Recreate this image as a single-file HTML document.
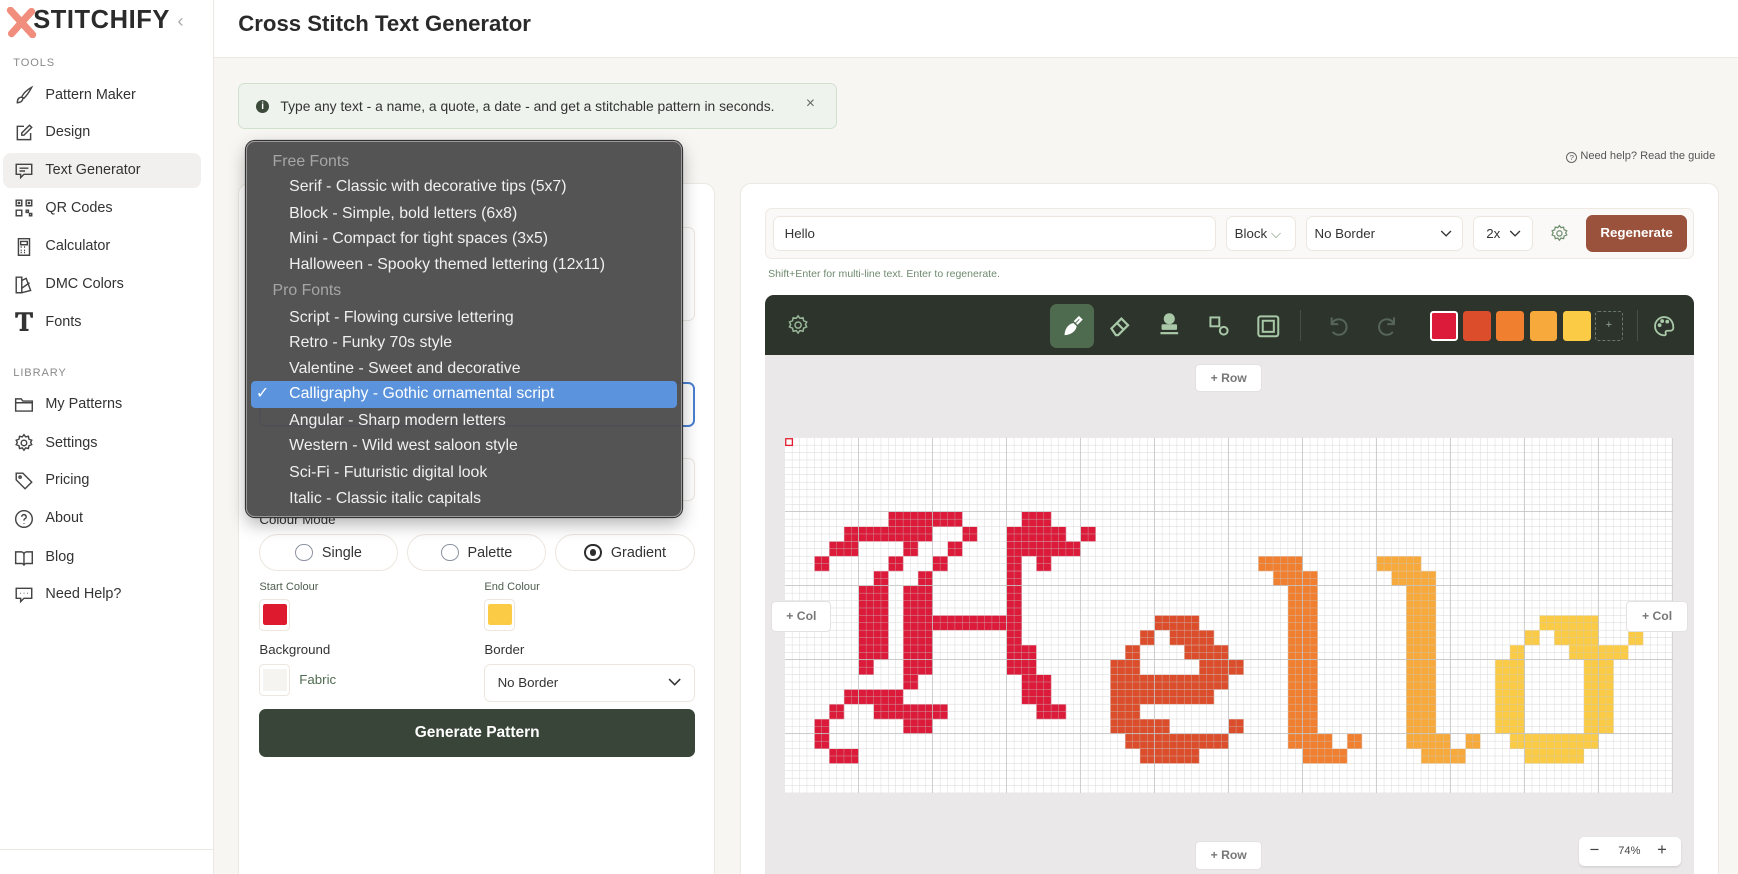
<!DOCTYPE html>
<html><head><meta charset="utf-8">
<style>
*{box-sizing:border-box;margin:0;padding:0}
html,body{width:1738px;height:874px;overflow:hidden;background:#f7f6f3}
#root{zoom:1.10842;width:1568px;height:789px;position:relative;font-family:"Liberation Sans",sans-serif;color:#2e2e2e;overflow:hidden}
.a{position:absolute}
.side{left:0;top:0;width:193px;height:789px;background:#fff;border-right:1px solid #ebe8e4}
.nav{position:absolute;left:3px;width:178px;height:32px;font-size:13px;color:#333;line-height:32px;padding-left:38px}
.nav svg{position:absolute;left:10px;top:7px}
.nav.act{background:#f1f0ee;border-radius:7px}
.sec{position:absolute;left:12px;font-size:10px;color:#8a8a8a;letter-spacing:.8px}
.card{background:#fff;border:1px solid #ece8e2;border-radius:10px}
.box{background:#fff;border:1px solid #ece6df;border-radius:6px}
.pill{position:absolute;top:482px;height:33px;border:1px solid #ece6df;border-radius:17px;background:#fff;font-size:13px;color:#333;display:flex;align-items:center;justify-content:center;gap:8px}
.rad{width:16px;height:16px;border:1.5px solid #8c93a0;border-radius:50%;display:inline-block}
.dd{left:222px;top:127px;width:393px;height:339px;background:rgba(78,78,78,.97);border:1px solid #9a9a9a;border-radius:8px;box-shadow:0 0 0 1px #333,0 6px 16px rgba(0,0,0,.3)}
.it{position:absolute;left:38px;font-size:14.3px;color:#f0f0f0;line-height:20px}
.hd{position:absolute;left:23px;font-size:14.3px;color:#a6a6a6;line-height:20px}
.sw{position:absolute;top:281px;width:25px;height:27px;border-radius:3px}
.btn{position:absolute;background:#fff;border:1px solid #e4e2e0;border-radius:4px;font-size:11px;font-weight:bold;color:#777;text-align:center}
</style></head><body><div id="root">

<!-- sidebar -->
<div class="a side">
  <svg class="a" style="left:5px;top:6px" width="28" height="28" viewBox="0 0 28 28"><path d="M4 3 L24 25 M23 4 L5 24" stroke="#f08d7c" stroke-width="6.5" stroke-linecap="round"/></svg>
  <div class="a" style="left:30px;top:5px;font-size:23px;font-weight:bold;color:#2b2b2b;letter-spacing:.5px">STITCHIFY</div>
  <div class="a" style="left:160px;top:9px;font-size:17px;color:#aaa">‹</div>
  <div class="sec" style="top:51px">TOOLS</div>
  <div class="nav" style="top:70px"><svg width="18" height="18" viewBox="0 0 18 18" fill="none" stroke="#444" stroke-width="1.3"><path d="M16 2 C12 4 8 8 7 11 L9 12 C11 10 14 6 16 2Z M7 11 C4 11 3 13 3 16 C5 16 8 15 8 12"/></svg>Pattern Maker</div>
  <div class="nav" style="top:104px"><svg width="18" height="18" viewBox="0 0 18 18" fill="none" stroke="#444" stroke-width="1.3"><path d="M9 3H3v12h12V9 M14 2l2 2-7 7H7V9z"/></svg>Design</div>
  <div class="nav act" style="top:138px"><svg width="18" height="18" viewBox="0 0 18 18" fill="none" stroke="#444" stroke-width="1.3"><path d="M2 3h14v9H9l-3 3v-3H2z M5 6.5h8 M5 9h5"/></svg>Text Generator</div>
  <div class="nav" style="top:172px"><svg width="18" height="18" viewBox="0 0 18 18" fill="none" stroke="#444" stroke-width="1.3"><path d="M2 2h5v5H2z M11 2h5v5h-5z M2 11h5v5H2z M11 11h2v2h-2z M14 14h2v2h-2z M4 4h1v1H4z M13 4h1v1h-1z"/></svg>QR Codes</div>
  <div class="nav" style="top:207px"><svg width="18" height="18" viewBox="0 0 18 18" fill="none" stroke="#444" stroke-width="1.3"><path d="M4 1.5h10v15H4z M6 4h6v3H6z M6 9h1 M9 9h1 M12 9h0 M6 12h1 M9 12h1 M6 14h1 M9 14h1"/></svg>Calculator</div>
  <div class="nav" style="top:241px"><svg width="18" height="18" viewBox="0 0 18 18" fill="none" stroke="#444" stroke-width="1.3"><path d="M2 2h5v14H2z M7 5l4-2 4 11-8 2 M7 12l7-5"/></svg>DMC Colors</div>
  <div class="nav" style="top:275px"><svg width="20" height="20" viewBox="0 0 20 20" style="left:9px;top:5px"><path d="M2 2h16v5h-2l-1-3h-3v13h2v2H6v-2h2V4H5L4 7H2z" fill="#333"/></svg>Fonts</div>
  <div class="sec" style="top:331px">LIBRARY</div>
  <div class="nav" style="top:349px"><svg width="18" height="18" viewBox="0 0 18 18" fill="none" stroke="#444" stroke-width="1.3"><path d="M1.5 3.5h5l1.5 2h8.5v9h-15z M1.5 7h15"/></svg>My Patterns</div>
  <div class="nav" style="top:384px"><svg width="18" height="18" viewBox="0 0 18 18" fill="none" stroke="#444" stroke-width="1.3"><circle cx="9" cy="9" r="2.5"/><path d="M9 1.5l1.5 2 2.5-.5.5 2.5 2.5 1-1 2 1 2-2.5 1-.5 2.5-2.5-.5-1.5 2-1.5-2-2.5.5-.5-2.5-2.5-1 1-2-1-2 2.5-1 .5-2.5 2.5.5z"/></svg>Settings</div>
  <div class="nav" style="top:418px"><svg width="18" height="18" viewBox="0 0 18 18" fill="none" stroke="#444" stroke-width="1.3"><path d="M2 2h6l8 8-6 6-8-8z"/><circle cx="5.5" cy="5.5" r="1"/></svg>Pricing</div>
  <div class="nav" style="top:452px"><svg width="18" height="18" viewBox="0 0 18 18" fill="none" stroke="#444" stroke-width="1.3"><circle cx="9" cy="9" r="7.5"/><path d="M7 7a2 2 0 1 1 2.5 2c-.5.3-.5.8-.5 1.5 M9 13v.5"/></svg>About</div>
  <div class="nav" style="top:487px"><svg width="18" height="18" viewBox="0 0 18 18" fill="none" stroke="#444" stroke-width="1.3"><path d="M1.5 3.5h5a2.5 2.5 0 0 1 2.5 2.5v10a2 2 0 0 0-2-2h-5.5z M16.5 3.5h-5A2.5 2.5 0 0 0 9 6v10a2 2 0 0 1 2-2h5.5z"/></svg>Blog</div>
  <div class="nav" style="top:521px"><svg width="18" height="18" viewBox="0 0 18 18" fill="none" stroke="#444" stroke-width="1.3"><path d="M2 3h14v9H9l-3 3v-3H2z M5.5 7.5h.5 M8.8 7.5h.5 M12 7.5h.5"/></svg>Need Help?</div>
  <div class="a" style="left:0;top:766px;width:192px;border-top:1px solid #ebe8e4"></div>
</div>

<!-- header -->
<div class="a" style="left:193px;top:0;width:1375px;height:52px;background:#fff;border-bottom:1px solid #ece8e2"></div>
<div class="a" style="left:215px;top:10px;font-size:20px;font-weight:bold;color:#2a2a2a">Cross Stitch Text Generator</div>

<!-- banner -->
<div class="a" style="left:215px;top:75px;width:540px;height:41px;background:#eef4ed;border:1px solid #cfe0cd;border-radius:6px"></div>
<div class="a" style="left:231px;top:90px;width:12px;height:12px;border-radius:50%;background:#3c4a3c;color:#fff;font-size:9px;font-weight:bold;text-align:center;line-height:12px">i</div>
<div class="a" style="left:253px;top:88px;font-size:12.5px;color:#333">Type any text - a name, a quote, a date - and get a stitchable pattern in seconds.</div>
<div class="a" style="left:727px;top:86px;font-size:14px;color:#666">×</div>

<div class="a" style="left:1413px;top:135px;font-size:10px;color:#555"><span style="display:inline-block;width:10px;height:10px;border:1px solid #666;border-radius:50%;font-size:7px;text-align:center;line-height:9px;vertical-align:-1px">?</span> Need help? Read the guide</div>

<!-- left card -->
<div class="a card" style="left:215px;top:165px;width:430px;height:640px"></div>
<div class="a box" style="left:234px;top:205px;width:393px;height:85px"></div>
<div class="a box" style="left:234px;top:345px;width:393px;height:40px;border:2px solid #4a7fd0"></div>
<div class="a box" style="left:234px;top:413px;width:393px;height:39px"></div>
<div class="a" style="left:234px;top:462px;font-size:12px;color:#333">Colour Mode</div>
<div class="pill" style="left:234px;width:125px"><span class="rad"></span>Single</div>
<div class="pill" style="left:367px;width:126px"><span class="rad"></span>Palette</div>
<div class="pill" style="left:501px;width:126px"><span class="rad" style="border:2px solid #2d2d2d;position:relative"><span style="position:absolute;left:3px;top:3px;width:6px;height:6px;border-radius:50%;background:#2d2d2d"></span></span>Gradient</div>
<div class="a" style="left:234px;top:524px;font-size:10px;color:#4f5f4f">Start Colour</div>
<div class="a" style="left:437px;top:524px;font-size:10px;color:#4f5f4f">End Colour</div>
<div class="a box" style="left:234px;top:540px;width:28px;height:29px;border-radius:4px;padding:4px 2px"><div style="width:100%;height:100%;background:#de1a2e;border-radius:2px"></div></div>
<div class="a box" style="left:437px;top:540px;width:28px;height:29px;border-radius:4px;padding:4px 2px"><div style="width:100%;height:100%;background:#fbcb45;border-radius:2px"></div></div>
<div class="a" style="left:234px;top:579px;font-size:12px;color:#333">Background</div>
<div class="a" style="left:437px;top:579px;font-size:12px;color:#333">Border</div>
<div class="a box" style="left:234px;top:599px;width:28px;height:29px;border-radius:4px;padding:4px 2px"><div style="width:100%;height:100%;background:#f6f4f0"></div></div>
<div class="a" style="left:270px;top:606px;font-size:12px;color:#4f6a4f">Fabric</div>
<div class="a box" style="left:437px;top:599px;width:190px;height:34px;font-size:12px;color:#333;padding:9px 11px">No Border<svg class="a" style="right:11px;top:12px" width="12" height="8" viewBox="0 0 12 8"><path d="M1 1l5 5 5-5" stroke="#333" stroke-width="1.4" fill="none"/></svg></div>
<div class="a" style="left:234px;top:640px;width:393px;height:43px;background:#384538;border-radius:6px;color:#fff;font-size:14px;font-weight:bold;text-align:center;line-height:43px">Generate Pattern</div>

<!-- right card -->
<div class="a card" style="left:668px;top:165px;width:883px;height:640px"></div>
<div class="a" style="left:690px;top:188px;width:838px;height:46px;background:#faf9f7;border:1px solid #eee9e3;border-radius:6px"></div>
<div class="a box" style="left:697px;top:195px;width:400px;height:31px;font-size:12px;color:#333;padding:8px 10px">Hello</div>
<div class="a box" style="left:1106px;top:195px;width:63px;height:31px;font-size:12px;color:#333;padding:8px 7px">Block <span style="color:#7a9a7a">⌵</span></div>
<div class="a box" style="left:1178px;top:195px;width:142px;height:31px;font-size:12px;color:#333;padding:8px 7px">No Border<svg class="a" style="right:9px;top:12px" width="11" height="7" viewBox="0 0 12 8"><path d="M1 1l5 5 5-5" stroke="#333" stroke-width="1.4" fill="none"/></svg></div>
<div class="a box" style="left:1329px;top:195px;width:54px;height:31px;font-size:12px;color:#333;padding:8px 11px">2x<svg class="a" style="right:10px;top:12px" width="11" height="7" viewBox="0 0 12 8"><path d="M1 1l5 5 5-5" stroke="#333" stroke-width="1.4" fill="none"/></svg></div>
<svg class="a" style="left:1398px;top:202px" width="17" height="17" viewBox="0 0 18 18" fill="none" stroke="#6f8f6f" stroke-width="1.2"><circle cx="9" cy="9" r="2.5"/><path d="M9 1.5l1.5 2 2.5-.5.5 2.5 2.5 1-1 2 1 2-2.5 1-.5 2.5-2.5-.5-1.5 2-1.5-2-2.5.5-.5-2.5-2.5-1 1-2-1-2 2.5-1 .5-2.5 2.5.5z"/></svg>
<div class="a" style="left:1431px;top:194px;width:91px;height:33px;background:#9a523d;border-radius:6px;color:#fff;font-size:12px;font-weight:bold;text-align:center;line-height:33px">Regenerate</div>
<div class="a" style="left:693px;top:242px;font-size:9.5px;color:#6f8a6f">Shift+Enter for multi-line text. Enter to regenerate.</div>

<!-- editor -->
<div class="a" style="left:690px;top:266px;width:838px;height:540px;background:#eae8e8;border-radius:8px 8px 0 0;overflow:hidden">
  <div style="height:54px;background:#2c342b"></div>
</div>
<svg class="a" style="left:710px;top:283px" width="20" height="20" viewBox="0 0 18 18" fill="none" stroke="#9ab89a" stroke-width="1.2"><circle cx="9" cy="9" r="2.5"/><path d="M9 1.5l1.5 2 2.5-.5.5 2.5 2.5 1-1 2 1 2-2.5 1-.5 2.5-2.5-.5-1.5 2-1.5-2-2.5.5-.5-2.5-2.5-1 1-2-1-2 2.5-1 .5-2.5 2.5.5z"/></svg>
<div class="a" style="left:947px;top:274px;width:40px;height:40px;background:#4e6a4f;border-radius:6px"></div>
<svg class="a" style="left:955px;top:282px" width="24" height="24" viewBox="0 0 24 24"><path d="M5 20c0-5 3-10 8-11l3 3c-1 5-6 8-11 8z" fill="#fff"/><path d="M14 8l4-4 2 2-4 4" fill="none" stroke="#fff" stroke-width="2"/></svg>
<svg class="a" style="left:999px;top:282px" width="24" height="24" viewBox="0 0 24 24" fill="none" stroke="#a8c8a8" stroke-width="2"><path d="M4 14l9-9 6 6-9 9H8z"/><path d="M9 9l6 6" /></svg>
<svg class="a" style="left:1043px;top:281px" width="24" height="24" viewBox="0 0 24 24" fill="#a8c8a8"><circle cx="12" cy="7" r="5"/><rect x="5" y="12" width="14" height="5" rx="1"/><rect x="4" y="19" width="16" height="2"/></svg>
<svg class="a" style="left:1088px;top:282px" width="24" height="24" viewBox="0 0 24 24" fill="none" stroke="#a8c8a8" stroke-width="1.8"><rect x="4" y="4" width="8" height="8"/><circle cx="16" cy="16" r="3.5"/></svg>
<svg class="a" style="left:1132px;top:282px" width="24" height="24" viewBox="0 0 24 24" fill="none" stroke="#a8c8a8" stroke-width="1.8"><rect x="3" y="3" width="18" height="18" rx="2"/><rect x="7" y="7" width="10" height="10"/></svg>
<div class="a" style="left:1173px;top:280px;width:1px;height:28px;background:#445044"></div>
<svg class="a" style="left:1195px;top:282px" width="24" height="24" viewBox="0 0 24 24" fill="none" stroke="#56645a" stroke-width="1.8"><path d="M6 10a7 7 0 1 1 1 7 M6 4v6h6"/></svg>
<svg class="a" style="left:1240px;top:282px" width="24" height="24" viewBox="0 0 24 24" fill="none" stroke="#56645a" stroke-width="1.8"><path d="M18 10a7 7 0 1 0-1 7 M18 4v6h-6"/></svg>
<div class="sw" style="left:1290px;background:#dc1a3a;border:2px solid #fff"></div>
<div class="sw" style="left:1320px;background:#dc4e2b"></div>
<div class="sw" style="left:1350px;background:#f07f30"></div>
<div class="sw" style="left:1380px;background:#f8a93b"></div>
<div class="sw" style="left:1410px;background:#fbcb45"></div>
<div class="sw" style="left:1439px;border:1px dashed #6a786a;color:#9aa89a;font-size:10px;text-align:center;line-height:25px">+</div>
<div class="a" style="left:1477px;top:280px;width:1px;height:28px;background:#445044"></div>
<svg class="a" style="left:1490px;top:283px" width="22" height="22" viewBox="0 0 24 24" fill="none" stroke="#a8c8a8" stroke-width="1.8"><path d="M12 3a9 9 0 1 0 0 18c1.5 0 2-1 1.5-2s0-2.5 1.5-2.5H18a3 3 0 0 0 3-3C21 7 17 3 12 3z"/><circle cx="7.5" cy="11" r="1" fill="#a8c8a8"/><circle cx="10" cy="7" r="1" fill="#a8c8a8"/><circle cx="15" cy="7.5" r="1" fill="#a8c8a8"/></svg>

<!-- grid -->
<svg class="a" style="left:708.5px;top:395.2px" width="801" height="320.5" viewBox="0 0 120 48" preserveAspectRatio="none">
<defs>
<pattern id="mi" width="1" height="1" patternUnits="userSpaceOnUse"><path d="M1 0V1M0 1H1" stroke="rgba(200,200,200,.75)" stroke-width=".12"/></pattern>
<pattern id="ma" width="10" height="10" patternUnits="userSpaceOnUse"><path d="M10 0V10M0 10H10" stroke="#c4c4c4" stroke-width=".22"/></pattern>
</defs>
<rect width="120" height="48" fill="#fff"/>
<g fill="#dc1a3a">
<rect x="14" y="10" width="10" height="2"/><rect x="32" y="10" width="4" height="2"/>
<rect x="8" y="12" width="12" height="2"/><rect x="24" y="12" width="2" height="2"/><rect x="30" y="12" width="8" height="2"/><rect x="40" y="12" width="2" height="2"/>
<rect x="6" y="14" width="4" height="2"/><rect x="16" y="14" width="2" height="2"/><rect x="22" y="14" width="2" height="2"/><rect x="30" y="14" width="10" height="2"/>
<rect x="4" y="16" width="2" height="2"/><rect x="14" y="16" width="2" height="2"/><rect x="20" y="16" width="2" height="2"/><rect x="30" y="16" width="2" height="2"/><rect x="34" y="16" width="2" height="2"/>
<rect x="12" y="18" width="2" height="2"/><rect x="18" y="18" width="2" height="2"/><rect x="30" y="18" width="2" height="12"/>
<rect x="10" y="20" width="4" height="10"/><rect x="16" y="20" width="4" height="12"/>
<rect x="16" y="24" width="16" height="2"/>
<rect x="30" y="28" width="4" height="4"/><rect x="10" y="30" width="2" height="2"/>
<rect x="16" y="32" width="2" height="2"/><rect x="32" y="32" width="4" height="4"/>
<rect x="8" y="34" width="8" height="2"/>
<rect x="6" y="36" width="2" height="2"/><rect x="12" y="36" width="10" height="2"/><rect x="34" y="36" width="4" height="2"/>
<rect x="4" y="38" width="2" height="4"/><rect x="16" y="38" width="4" height="2"/>
<rect x="6" y="42" width="4" height="2"/>
</g>
<g fill="#dc4e2b">
<rect x="50" y="24" width="6" height="2"/>
<rect x="48" y="26" width="2" height="2"/><rect x="52" y="26" width="6" height="2"/>
<rect x="46" y="28" width="2" height="2"/><rect x="54" y="28" width="6" height="2"/>
<rect x="44" y="30" width="4" height="2"/><rect x="56" y="30" width="6" height="2"/>
<rect x="44" y="32" width="16" height="2"/>
<rect x="44" y="34" width="14" height="2"/>
<rect x="44" y="36" width="4" height="2"/>
<rect x="44" y="38" width="8" height="2"/><rect x="60" y="38" width="2" height="2"/>
<rect x="46" y="40" width="14" height="2"/>
<rect x="48" y="42" width="8" height="2"/>
</g>
<g fill="#f07f30">
<rect x="64" y="16" width="6" height="2"/><rect x="66" y="18" width="6" height="2"/><rect x="68" y="20" width="4" height="20"/>
<rect x="68" y="40" width="6" height="2"/><rect x="76" y="40" width="2" height="2"/><rect x="70" y="42" width="6" height="2"/>
</g>
<g fill="#f8a93b">
<rect x="80" y="16" width="6" height="2"/><rect x="82" y="18" width="6" height="2"/><rect x="84" y="20" width="4" height="20"/>
<rect x="84" y="40" width="6" height="2"/><rect x="92" y="40" width="2" height="2"/><rect x="86" y="42" width="6" height="2"/>
</g>
<g fill="#fbcb45">
<rect x="102" y="24" width="8" height="2"/>
<rect x="100" y="26" width="2" height="2"/><rect x="104" y="26" width="6" height="2"/><rect x="114" y="26" width="2" height="2"/>
<rect x="98" y="28" width="2" height="2"/><rect x="106" y="28" width="8" height="2"/>
<rect x="96" y="30" width="4" height="10"/><rect x="108" y="30" width="4" height="10"/>
<rect x="98" y="40" width="12" height="2"/>
<rect x="100" y="42" width="8" height="2"/>
</g>
<rect width="120" height="48" fill="url(#mi)"/>
<rect width="120" height="48" fill="url(#ma)"/>
<rect x=".1" y=".1" width=".9" height=".9" fill="none" stroke="#e02030" stroke-width=".18"/>
</svg>

<div class="btn" style="left:1078px;top:328px;width:61px;height:26px;line-height:25px">+ Row</div>
<div class="btn" style="left:1078px;top:759px;width:61px;height:26px;line-height:25px">+ Row</div>
<div class="btn" style="left:696px;top:542px;width:54px;height:28px;line-height:27px">+ Col</div>
<div class="btn" style="left:1467px;top:542px;width:56px;height:28px;line-height:27px">+ Col</div>

<div class="a" style="left:1425px;top:755px;width:92px;height:26px;background:#fff;border-radius:5px;box-shadow:0 1px 2px rgba(0,0,0,.1);font-size:10px;color:#444">
  <span class="a" style="left:9px;top:3px;font-size:15px">−</span><span class="a" style="left:35px;top:7px">74%</span><span class="a" style="left:70px;top:3px;font-size:15px">+</span>
</div>

<!-- dropdown -->
<div class="a dd">
  <div class="hd" style="top:8px">Free Fonts</div>
  <div class="it" style="top:31px">Serif - Classic with decorative tips (5x7)</div>
  <div class="it" style="top:55px">Block - Simple, bold letters (6x8)</div>
  <div class="it" style="top:78px">Mini - Compact for tight spaces (3x5)</div>
  <div class="it" style="top:101px">Halloween - Spooky themed lettering (12x11)</div>
  <div class="hd" style="top:125px">Pro Fonts</div>
  <div class="it" style="top:149px">Script - Flowing cursive lettering</div>
  <div class="it" style="top:172px">Retro - Funky 70s style</div>
  <div class="it" style="top:195px">Valentine - Sweet and decorative</div>
  <div class="a" style="left:4px;top:216px;width:384px;height:24px;background:#5b93dc;border-radius:4px"></div>
  <div class="it" style="left:8px;top:218px;color:#fff">✓</div>
  <div class="it" style="top:218px;color:#fff">Calligraphy - Gothic ornamental script</div>
  <div class="it" style="top:242px">Angular - Sharp modern letters</div>
  <div class="it" style="top:265px">Western - Wild west saloon style</div>
  <div class="it" style="top:289px">Sci-Fi - Futuristic digital look</div>
  <div class="it" style="top:312px">Italic - Classic italic capitals</div>
</div>

</div></body></html>
